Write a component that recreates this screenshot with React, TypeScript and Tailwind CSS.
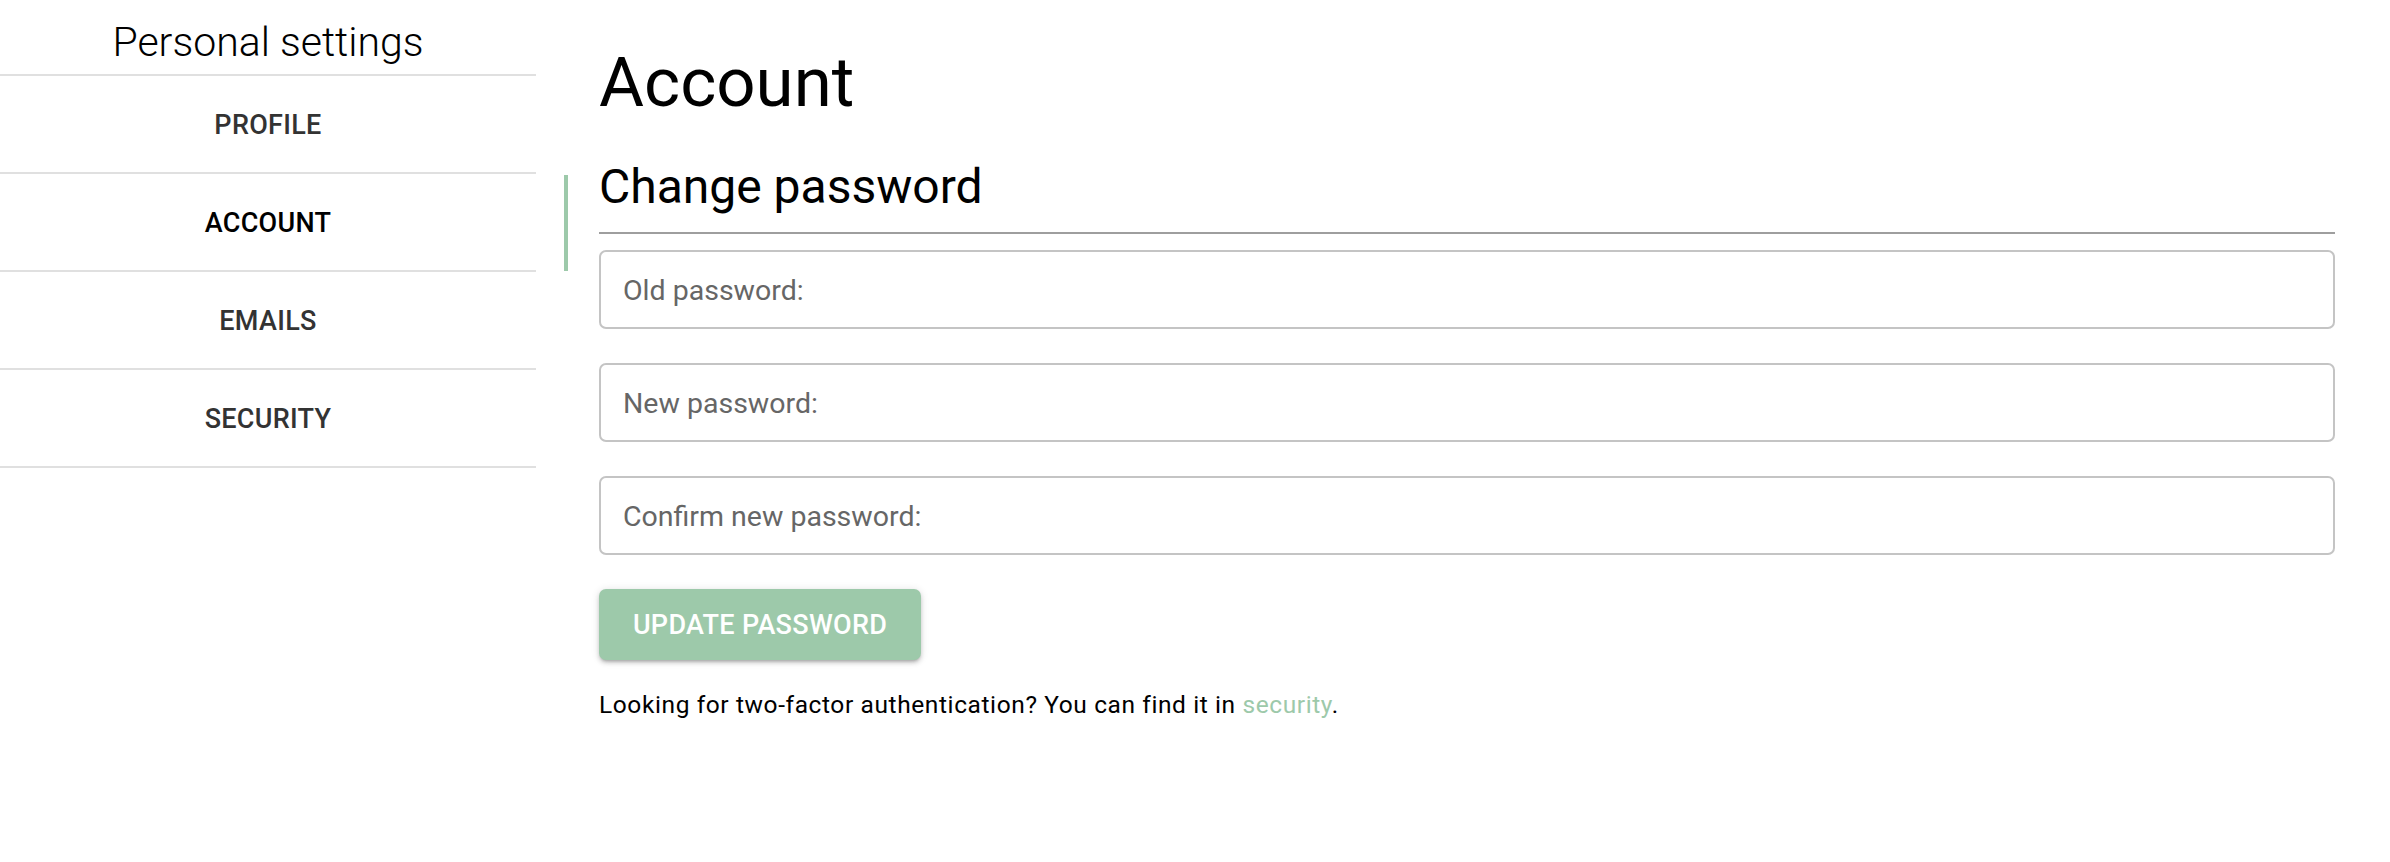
import { useState } from 'react';

const navItems = ['Profile', 'Account', 'Emails', 'Security'];

const fields = ['Old password:', 'New password:', 'Confirm new password:'];

const PasswordField = ({ label }: { label: string }) => (
  <div className="flex h-[79px] items-center rounded-[7px] border-2 border-[#c4c4c4] pl-[22px] pr-[21px] pt-[3px]">
    <input
      type="password"
      placeholder={label}
      className="w-full bg-transparent text-[28.5px] text-black outline-none placeholder:text-[#666]"
    />
  </div>
);

export default function App() {
  const [active] = useState('Account');

  return (
    <div className="flex min-h-[862px] w-full bg-white font-['Roboto',sans-serif] text-black">
      {/* Sidebar */}
      <aside className="w-[536px] shrink-0">
        <h2 className="h-[76px] border-b-2 border-[#e0e0e0] pt-[22px] text-center text-[41px] font-light leading-none">
          Personal settings
        </h2>
        <nav className="flex flex-col">
          {navItems.map((item) => (
            <a
              key={item}
              href="#"
              className={`flex h-[98px] items-center justify-center border-b-2 border-[#e0e0e0] pt-[3px] text-[27px] font-medium uppercase tracking-[0.3px] ${
                item === active ? 'text-black' : 'text-[#333]'
              }`}
            >
              {item}
            </a>
          ))}
        </nav>
      </aside>

      {/* Tab indicator column */}
      <div className="w-[63px] shrink-0 pl-[28px] pt-[175px]">
        <div className="h-[96px] w-[4px] bg-[#9dc9aa]" />
      </div>

      {/* Main */}
      <main className="flex-1 pr-[55px]">
        <h1 className="mt-[48px] text-[69px] leading-none">Account</h1>
        <h2 className="mt-[46px] text-[48px] leading-none">Change password</h2>
        <hr className="mt-[21px] border-t-2 border-[#9e9e9e]" />

        <form className="mt-[16px] flex flex-col gap-[34px]" onSubmit={(e) => e.preventDefault()}>
          {fields.map((f) => (
            <PasswordField key={f} label={f} />
          ))}
          <div>
            <button
              type="submit"
              className="h-[71px] w-[322px] rounded-[7px] bg-[#9dc9aa] pt-[2px] text-[27px] font-medium uppercase tracking-[0.3px] text-white shadow-[0_3px_3px_-2px_rgba(0,0,0,0.2),0_3px_4px_0_rgba(0,0,0,0.14),0_1px_8px_0_rgba(0,0,0,0.12)]"
            >
              Update password
            </button>
          </div>
        </form>

        <p className="mt-[27px] text-[24.5px] tracking-[0.6px]">
          Looking for two-factor authentication? You can find it in{' '}
          <a href="#" className="text-[#9dc9aa]">
            security
          </a>
          .
        </p>
      </main>
    </div>
  );
}
